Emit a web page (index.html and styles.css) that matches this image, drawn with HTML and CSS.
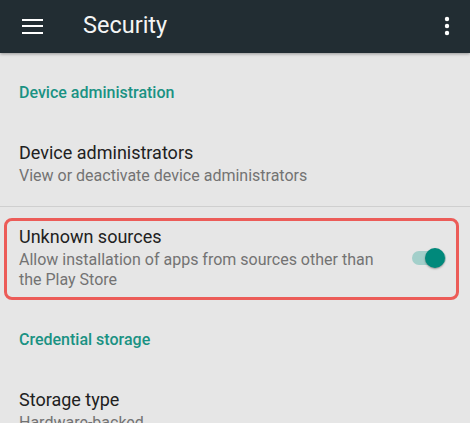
FILE: index.html
```html
<!DOCTYPE html>
<html>
<head>
<meta charset="utf-8">
<link rel="stylesheet" href="styles.css">
</head>
<body>
<header class="appbar">
  <svg class="menu" width="21" height="16" viewBox="0 0 21 16"><rect x="0" y="1" width="21" height="2" fill="#fff"/><rect x="0" y="7" width="21" height="2" fill="#fff"/><rect x="0" y="14" width="21" height="2" fill="#fff"/></svg>
  <h1 class="title">Security</h1>
  <svg class="more" width="6" height="20" viewBox="0 0 6 20"><circle cx="3" cy="3" r="2.2" fill="#fff"/><circle cx="3" cy="10" r="2.2" fill="#fff"/><circle cx="3" cy="17" r="2.2" fill="#fff"/></svg>
</header>
<main class="list">
  <div class="category first">Device administration</div>
  <div class="item item-admins">
    <div class="item-title">Device administrators</div>
    <div class="item-sub">View or deactivate device administrators</div>
  </div>
  <div class="divider"></div>
  <div class="item item-highlight">
    <div class="item-text">
      <div class="item-title">Unknown sources</div>
      <div class="item-sub">Allow installation of apps from sources other than the Play Store</div>
    </div>
    <div class="switch"><span class="track"></span><span class="thumb"></span></div>
  </div>
  <div class="category">Credential storage</div>
  <div class="item item-storage">
    <div class="item-title">Storage type</div>
    <div class="item-sub">Hardware-backed</div>
  </div>
</main>
</body>
</html>
```
FILE: styles.css
```css
* { box-sizing: border-box; }
html, body { margin: 0; padding: 0; }
body {
  width: 470px;
  height: 423px;
  overflow: hidden;
  background: #e6e6e6;
  font-family: Roboto, "Liberation Sans", sans-serif;
}
.appbar {
  height: 53px;
  background: #222d33;
  display: flex;
  align-items: center;
  padding-left: 22px;
  padding-right: 20px;
  box-shadow: 0 1px 3px rgba(0,0,0,0.35);
  position: relative;
}
.menu { display: block; margin-top: -2px; }
.title {
  margin: -3px 0 0 40px;
  font-size: 23.5px;
  font-weight: 400;
  color: #f4f4f4;
  flex: 1;
  line-height: 28px;
}
.more { display: block; margin-top: -1px; }
.list { display: flex; flex-direction: column; }
.category {
  margin-top: 30px;
  padding-left: 19px;
  font-size: 16px;
  line-height: 20px;
  font-weight: 500;
  color: #1a9283;
}
.item { padding-left: 19px; }
.item-admins { padding-top: 37px; padding-bottom: 20px; }
.item-title {
  font-size: 18px;
  line-height: 26px;
  color: #212121;
}
.item-sub {
  font-size: 16px;
  line-height: 19.5px;
  color: #737373;
}
.divider { height: 1px; background: #cfcfcf; }
.item-highlight {
  margin: 11px 11px 0 4px;
  border: 3px solid #ec5c58;
  border-radius: 8px;
  padding: 3px 0 7px 12px;
  display: flex;
  align-items: center;
  height: 82px;
}
.item-text { flex: 1; max-width: 365px; }
.switch {
  position: relative;
  width: 36px;
  height: 20px;
  margin-left: 27px;
  margin-top: 2px;
}
.track {
  position: absolute;
  left: 1px; top: 3px;
  width: 34px; height: 14px;
  border-radius: 7px;
  background: #a3cfca;
}
.thumb {
  position: absolute;
  left: 14px; top: 0;
  width: 20px; height: 20px;
  border-radius: 50%;
  background: #00897b;
  box-shadow: 0 1px 2px rgba(0,0,0,0.35);
}
.item-storage { padding-top: 37px; }
```
